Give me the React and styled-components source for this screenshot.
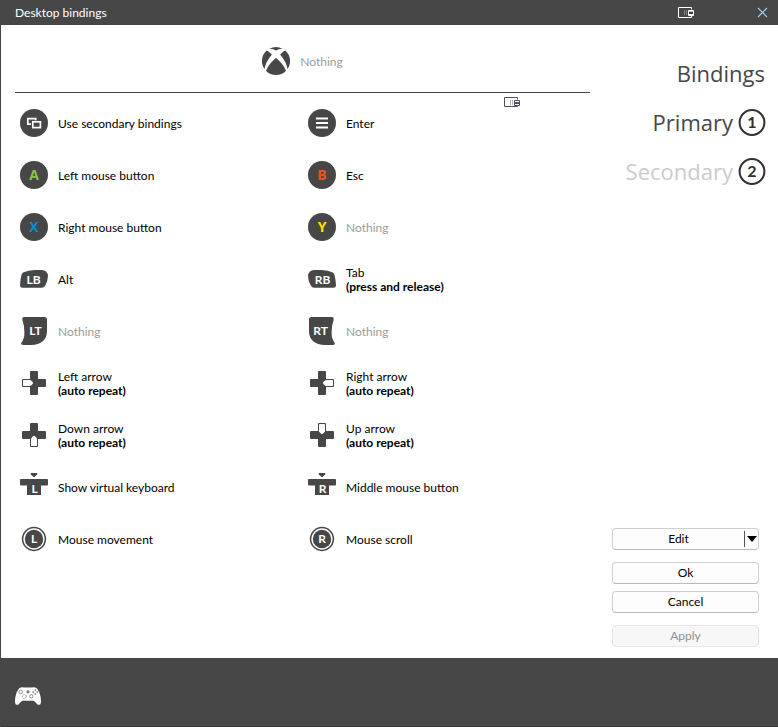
import React from "react";
import styled, { createGlobalStyle } from "styled-components";

const DARK = "#474747";
const FONT = 'Lato, "Open Sans", sans-serif';
const WIDE_FONT = '"Open Sans", "Noto Sans", sans-serif';

const GlobalStyle = createGlobalStyle`
  *, *::before, *::after { box-sizing: border-box; }
  body { margin: 0; background: #fff; font-family: ${FONT}; font-size: 12px; color: #000; }
  button { font: inherit; color: inherit; background: none; border: 0; padding: 0; margin: 0; text-align: left; cursor: pointer; }
  svg { display: block; flex: none; }
  h1, h2, ul { margin: 0; padding: 0; font-weight: 400; }
`;

const Window = styled.div`
  min-height: 100vh;
  display: flex;
  flex-direction: column;
  border-left: 1px solid ${DARK};
`;

const TitleBar = styled.header`
  height: 25px;
  display: flex;
  align-items: center;
  padding: 0 10px 0 14px;
  background: ${DARK};
  color: #fff;
`;

const Title = styled.h1`
  flex: 1;
  font-size: 12px;
  line-height: 16px;
`;

const TitleButton = styled.button`
  margin-left: ${(p) => p.$gap || 0}px;
`;

const Main = styled.main`
  flex: 1;
  display: flex;
`;

const BindingsPanel = styled.section`
  flex: 1;
  min-width: 0;
  padding: 22px 0 0 14px;
`;

const GuideRow = styled.div`
  display: flex;
  justify-content: center;
  padding-bottom: 17px;
  margin-right: 1px;
  border-bottom: 1px solid ${DARK};
`;

const BindingGrid = styled.ul`
  position: relative;
  margin-top: 4px;
  display: grid;
  grid-template-columns: 1fr 1fr;
  grid-auto-rows: 52px;
  list-style: none;
`;

const Cell = styled.li`
  display: flex;
  align-items: center;
  padding-left: 5px;
`;

const BindingButton = styled.button`
  display: flex;
  align-items: center;
  gap: 10px;
`;

const BindingText = styled.span`
  display: flex;
  flex-direction: column;
  padding-top: 2px;
  line-height: 14px;
  white-space: nowrap;
  color: ${(p) => (p.$empty ? "#9b9b9b" : "#000")};
`;

const Modifier = styled.strong`
  font-weight: 700;
`;

const FloatingMark = styled.li`
  position: absolute;
  top: 0;
  right: 71px;
`;

const Sidebar = styled.aside`
  width: 187px;
  flex: none;
  display: flex;
  flex-direction: column;
  justify-content: space-between;
  padding: 24px 12px 11px 0;
`;

const SetList = styled.div`
  display: flex;
  flex-direction: column;
  align-items: flex-end;
  font-family: ${WIDE_FONT};
  font-size: 22px;
  line-height: 49px;
  color: ${DARK};
`;

const SetHeading = styled.h2`
  font-size: 22px;
  line-height: 49px;
  padding-right: 1px;
`;

const SetButton = styled.button`
  display: flex;
  align-items: center;
  gap: 5px;
  height: 49px;
  color: ${(p) => (p.$muted ? "#cbcbcb" : DARK)};
`;

const Actions = styled.div`
  display: flex;
  flex-direction: column;
  margin: 0 7px 0 21px;
`;

const ActionButton = styled.button`
  height: 22px;
  margin-top: ${(p) => p.$gap}px;
  border: 1px solid #d0d0d0;
  border-bottom-color: #bababa;
  border-radius: 4px;
  background: #fdfdfd;
  text-align: center;
  line-height: 20px;
  &:disabled {
    border-color: #e6e6e6;
    background: #f7f7f7;
    color: #8f8f8f;
    cursor: default;
  }
`;

const SplitButton = styled.div`
  height: 22px;
  display: flex;
  border: 1px solid #d0d0d0;
  border-bottom-color: #bababa;
  border-radius: 4px;
  background: #fdfdfd;
`;

const SplitMain = styled.button`
  flex: 1;
  text-align: center;
  line-height: 20px;
`;

const SplitToggle = styled.button`
  width: 14px;
  margin: 2px 0;
  border-left: 1px solid #555;
  display: flex;
  align-items: center;
  justify-content: center;
`;

const Footer = styled.footer`
  height: 69px;
  display: flex;
  align-items: center;
  padding: 8px 14px 0;
  background: ${DARK};
  border-bottom: 1px solid #393939;
`;

function Svg({ children, width = 28, height = 28 }) {
  return (
    <svg width={width} height={height} viewBox={`0 0 ${width} ${height}`} aria-hidden="true">
      {children}
    </svg>
  );
}

function Glyph({ x = 14, y, size = 12, color = "#fff", font = FONT, children }) {
  return (
    <text x={x} y={y} fontSize={size} fontWeight="700" fill={color} textAnchor="middle" fontFamily={font}>
      {children}
    </text>
  );
}

function GuideIcon() {
  return (
    <Svg>
      <g fill={DARK}>
        <path d="M7.3 1.8Q14-1.8 20.7 1.8Q17.2 1.4 14 3.6Q10.8 1.4 7.3 1.8Z" />
        <path d="M4.4 3.8Q6.3 3.6 9.9 7.6Q4 14.5 2.4 22A14 14 0 0 1 4.4 3.8Z" />
        <path d="M23.6 3.8Q21.7 3.6 18.1 7.6Q24 14.5 25.6 22A14 14 0 0 0 23.6 3.8Z" />
        <path d="M14 11Q21.5 17 24 23.7Q20 28 14 28Q8 28 4 23.7Q6.5 17 14 11Z" />
      </g>
    </Svg>
  );
}

function FaceIcon({ letter, color }) {
  return (
    <Svg>
      <circle cx="14" cy="14" r="14" fill={DARK} />
      <Glyph y={19} size={14} color={color} font={WIDE_FONT}>{letter}</Glyph>
    </Svg>
  );
}

function ViewIcon() {
  return (
    <Svg>
      <circle cx="14" cy="14" r="14" fill={DARK} />
      <path d="M11 15.2H7.8V9.7H15.7V11.2" fill="none" stroke="#fff" strokeWidth="1.7" />
      <rect x="12.8" y="12.8" width="7.6" height="5.8" fill="none" stroke="#fff" strokeWidth="1.7" />
    </Svg>
  );
}

function MenuIcon() {
  return (
    <Svg>
      <circle cx="14" cy="14" r="14" fill={DARK} />
      <path d="M8 9.5H20M8 14H20M8 18.5H20" stroke="#fff" strokeWidth="2" />
    </Svg>
  );
}

function BumperIcon({ label, right }) {
  return (
    <Svg>
      <path
        transform={right ? "matrix(-1 0 0 1 28 0)" : undefined}
        d="M3.2 7.6Q8 5 14.5 5H22Q24.5 5 26 6.6Q28 8.6 28 11Q27.6 17 25.3 20.6Q24 22.8 21.8 22.8H2.5Q0 22.8 0 20.4Q.3 14.5 1.4 10.2Q1.8 8.3 3.2 7.6Z"
        fill={DARK}
      />
      <Glyph x={right ? 14.5 : 13.5} y={19}>{label}</Glyph>
    </Svg>
  );
}

function TriggerIcon({ label, right }) {
  return (
    <Svg>
      <path
        transform={right ? "matrix(-1 0 0 1 28 0)" : undefined}
        d="M4 0H24.4Q27 0 27 2.7V13.5Q27 27.8 10.5 28H3Q.8 28 1.3 25.8Q4.5 22 4.4 15.5Q4.3 8 2.3 2.4Q2 0 4 0Z"
        fill={DARK}
      />
      <Glyph x={right ? 12.5 : 15.5} y={17.5}>{label}</Glyph>
    </Svg>
  );
}

function DpadIcon({ angle }) {
  return (
    <Svg>
      <path
        d="M11 2H17Q18 2 18 3V10H25Q26 10 26 11V17Q26 18 25 18H18V25Q18 26 17 26H11Q10 26 10 25V18H3Q2 18 2 17V11Q2 10 3 10H10V3Q10 2 11 2Z"
        fill={DARK}
      />
      <path
        transform={`rotate(${angle} 14 14)`}
        d="M3.4 11H10.2Q12.8 12.3 13.2 14Q12.8 15.7 10.2 17H3.4Q3 17 3 16.6V11.4Q3 11 3.4 11Z"
        fill="#fff"
      />
    </Svg>
  );
}

function StickClickIcon({ letter }) {
  return (
    <Svg>
      <path d="M10.8 0H17.2V1.2L14.8 3.7Q14 4.3 13.2 3.7L10.8 1.2Z" fill={DARK} />
      <path d="M1 6H27Q28 6 28 7V11.6Q28 12.6 27 12.6H21V22H7V12.6H1Q0 12.6 0 11.6V7Q0 6 1 6Z" fill={DARK} />
      <Glyph x={14.5} y={20}>{letter}</Glyph>
    </Svg>
  );
}

function StickIcon({ letter }) {
  return (
    <Svg>
      <circle cx="14" cy="14" r="11.4" fill="none" stroke={DARK} strokeWidth="1.5" />
      <circle cx="14" cy="14" r="9.2" fill={DARK} />
      <Glyph y={18}>{letter}</Glyph>
    </Svg>
  );
}

function KeyboardMark({ light }) {
  const line = light ? "#fff" : "#505064";
  const inner = light ? "#858585" : "#b0b0bc";
  const h = light ? 10 : 9;
  return (
    <Svg width={16} height={11}>
      <path d={`M13.5 2.5V.5H.5V${h + 0.5}H13.5V9`} fill="none" stroke={line} />
      <path d="M6.5 3V8M8.5 3V8" stroke={inner} />
      <rect x="10" y="3" width="6" height="6" rx="1" fill={line} />
      <rect x="11" y="4" width="4" height="1" fill={light ? "#b8b8c8" : "#fff"} />
      <rect x="11" y={light ? 5 : 7} width="4" height={light ? 2 : 1} fill={light ? "#3c3c48" : "#fff"} />
    </Svg>
  );
}

function NumberIcon({ n }) {
  return (
    <Svg>
      <circle cx="14" cy="13.5" r="12.4" fill="none" stroke="#303030" strokeWidth="2" />
      <Glyph y={19} size={16} color="#303030">{n}</Glyph>
    </Svg>
  );
}

function GamepadIcon() {
  return (
    <Svg width={26} height={18}>
      <path
        d="M4 1.5Q6.5-.2 9 .6H17Q19.5-.2 22 1.5Q24.3 4 25.4 9Q26.6 15 25.4 17.2Q23.6 18.6 22 16.9Q20.4 14.8 18.5 13.8H7.5Q5.6 14.8 4 16.9Q2.4 18.6 .6 17.2Q-.6 15 .6 9Q1.7 4 4 1.5Z"
        fill="#fff"
      />
      <g fill="none" stroke="#777" strokeWidth=".8">
        <circle cx="5.7" cy="5" r="1.8" />
        <circle cx="9.3" cy="9.5" r="1.9" strokeDasharray="1.5 .8" />
        <circle cx="16.3" cy="9.3" r="1.7" />
      </g>
      <circle cx="13" cy="4.8" r="1.6" fill="#777" />
      <g fill="#888">
        <circle cx="20.3" cy="3" r=".9" />
        <circle cx="20.3" cy="7" r=".9" />
        <circle cx="18.3" cy="5" r=".9" />
        <circle cx="22.3" cy="5" r=".9" />
      </g>
    </Svg>
  );
}

const BINDINGS = [
  { icon: <ViewIcon />, text: "Use secondary bindings" },
  { icon: <MenuIcon />, text: "Enter" },
  { icon: <FaceIcon letter="A" color="#8bc34a" />, text: "Left mouse button" },
  { icon: <FaceIcon letter="B" color="#f4511e" />, text: "Esc" },
  { icon: <FaceIcon letter="X" color="#0a8ecb" />, text: "Right mouse button" },
  { icon: <FaceIcon letter="Y" color="#ffe100" /> },
  { icon: <BumperIcon label="LB" />, text: "Alt" },
  { icon: <BumperIcon label="RB" right />, text: "Tab", modifier: "(press and release)" },
  { icon: <TriggerIcon label="LT" /> },
  { icon: <TriggerIcon label="RT" right /> },
  { icon: <DpadIcon angle={0} />, text: "Left arrow", modifier: "(auto repeat)" },
  { icon: <DpadIcon angle={180} />, text: "Right arrow", modifier: "(auto repeat)" },
  { icon: <DpadIcon angle={270} />, text: "Down arrow", modifier: "(auto repeat)" },
  { icon: <DpadIcon angle={90} />, text: "Up arrow", modifier: "(auto repeat)" },
  { icon: <StickClickIcon letter="L" />, text: "Show virtual keyboard" },
  { icon: <StickClickIcon letter="R" />, text: "Middle mouse button" },
  { icon: <StickIcon letter="L" />, text: "Mouse movement" },
  { icon: <StickIcon letter="R" />, text: "Mouse scroll" },
];

function Binding({ icon, text, modifier }) {
  return (
    <BindingButton type="button">
      {icon}
      <BindingText $empty={!text}>
        <span>{text || "Nothing"}</span>
        {modifier && <Modifier>{modifier}</Modifier>}
      </BindingText>
    </BindingButton>
  );
}

export default function App() {
  return (
    <>
      <GlobalStyle />
      <Window>
        <TitleBar>
          <Title>Desktop bindings</Title>
          <TitleButton type="button" aria-label="Input panel">
            <KeyboardMark light />
          </TitleButton>
          <TitleButton type="button" aria-label="Close" $gap={63}>
            <Svg width={11} height={11}>
              <path d="M1 1L10 10M10 1L1 10" stroke="#a9d0ee" strokeWidth="1.1" />
            </Svg>
          </TitleButton>
        </TitleBar>
        <Main>
          <BindingsPanel>
            <GuideRow>
              <Binding icon={<GuideIcon />} />
            </GuideRow>
            <BindingGrid>
              {BINDINGS.map((b, i) => (
                <Cell key={i}>
                  <Binding {...b} />
                </Cell>
              ))}
              <FloatingMark>
                <KeyboardMark />
              </FloatingMark>
            </BindingGrid>
          </BindingsPanel>
          <Sidebar>
            <SetList>
              <SetHeading>Bindings</SetHeading>
              <SetButton type="button">
                Primary <NumberIcon n="1" />
              </SetButton>
              <SetButton type="button" $muted>
                Secondary <NumberIcon n="2" />
              </SetButton>
            </SetList>
            <Actions>
              <SplitButton>
                <SplitMain type="button">Edit</SplitMain>
                <SplitToggle type="button" aria-label="More edit options">
                  <Svg width={10} height={6}>
                    <path d="M0 0H10L5 6Z" fill="#000" />
                  </Svg>
                </SplitToggle>
              </SplitButton>
              <ActionButton type="button" $gap={12}>Ok</ActionButton>
              <ActionButton type="button" $gap={7}>Cancel</ActionButton>
              <ActionButton type="button" $gap={12} disabled>Apply</ActionButton>
            </Actions>
          </Sidebar>
        </Main>
        <Footer>
          <GamepadIcon />
        </Footer>
      </Window>
    </>
  );
}
